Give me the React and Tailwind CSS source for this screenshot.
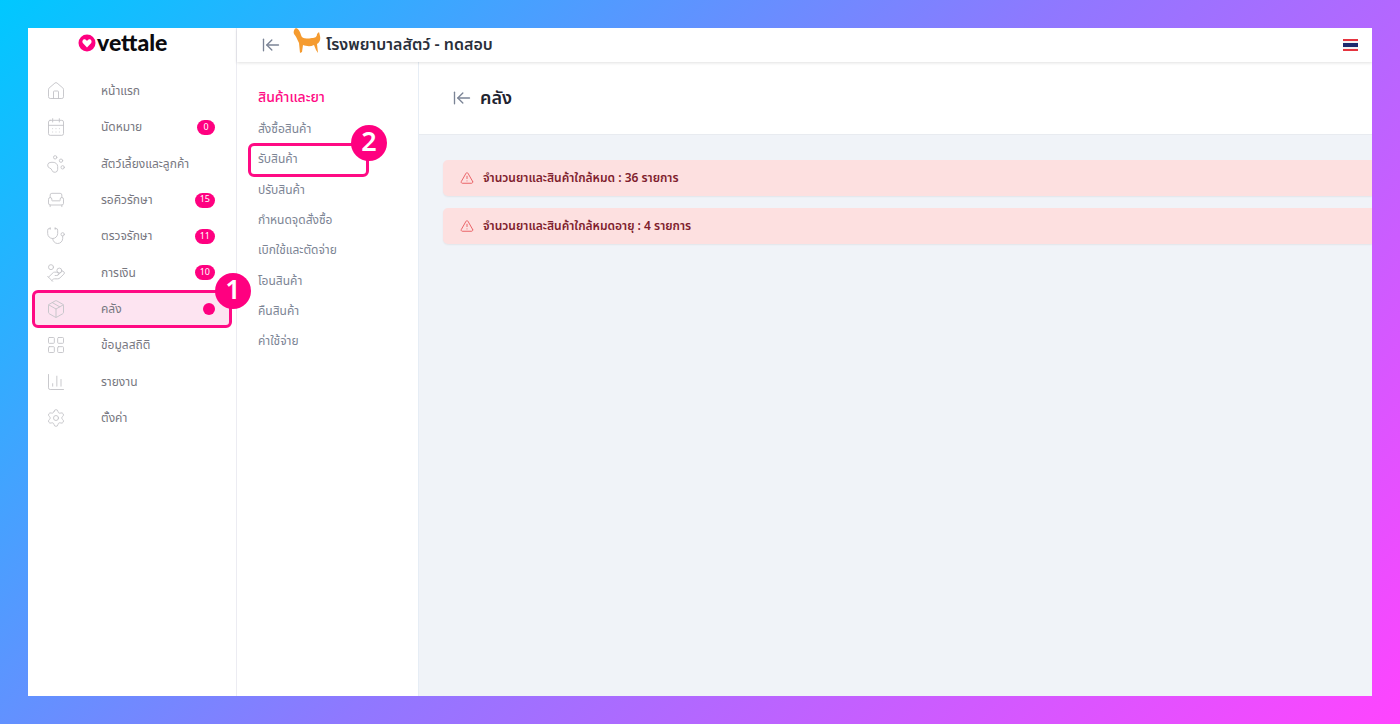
import React from 'react';
import { House, CalendarDays, PawPrint, Armchair, Stethoscope, HandCoins, Package, LayoutGrid, ChartColumn, Settings, ArrowLeftToLine, TriangleAlert } from 'lucide-react';

const font = { fontFamily: '"Noto Sans Thai", "Noto Sans", Inter, sans-serif' };

const mainMenu = [
  { label: 'หน้าแรก', icon: House },
  { label: 'นัดหมาย', icon: CalendarDays, badge: '0' },
  { label: 'สัตว์เลี้ยงและลูกค้า', icon: PawPrint },
  { label: 'รอคิวรักษา', icon: Armchair, badge: '15' },
  { label: 'ตรวจรักษา', icon: Stethoscope, badge: '11' },
  { label: 'การเงิน', icon: HandCoins, badge: '10' },
  { label: 'คลัง', icon: Package, active: true },
  { label: 'ข้อมูลสถิติ', icon: LayoutGrid },
  { label: 'รายงาน', icon: ChartColumn },
  { label: 'ตั้งค่า', icon: Settings },
];

const subMenu = ['สั่งซื้อสินค้า', 'รับสินค้า', 'ปรับสินค้า', 'กำหนดจุดสั่งซื้อ', 'เบิกใช้และตัดจ่าย', 'โอนสินค้า', 'คืนสินค้า', 'ค่าใช้จ่าย'];

const alerts = ['จำนวนยาและสินค้าใกล้หมด : 36 รายการ', 'จำนวนยาและสินค้าใกล้หมดอายุ : 4 รายการ'];

const Marker = ({ n, className }) => (
  <div className={`absolute flex h-[36px] w-[36px] items-center justify-center rounded-full bg-[#ff0080] text-[27px] font-semibold text-white ${className}`}>
    {n}
  </div>
);

const MenuRow = ({ item }) => {
  const Icon = item.icon;
  return (
    <div className="relative flex h-[36.3px] items-center pl-[18px] pr-[21px]">
      {item.active && <div className="absolute left-[4px] right-[4px] top-[-1px] h-[38px] rounded-[6px] border-[3px] border-[#ff0a84] bg-[#fde4f1]" />}
      <Icon className="relative h-[20px] w-[20px] text-[#c4c4c8]" strokeWidth={1.1} />
      <span className="relative ml-[35px] text-[12px] text-[#77777f]">{item.label}</span>
      {item.badge && (
        <span className="relative ml-auto flex h-[15px] min-w-[18px] items-center justify-center rounded-full bg-[#ff0080] px-[5px] text-[9px] text-white">{item.badge}</span>
      )}
      {item.active && <span className="relative ml-auto h-[12px] w-[12px] rounded-full bg-[#ff0080]" />}
    </div>
  );
};

const DogIcon = () => (
  <svg viewBox="0 0 28 26" className="h-[26px] w-[28px]">
    <path d="M3 0 C6 1 7 4 8 7 C9 11 13 11 19 10 C22 10 24 9 24 6 L26 4 L27 8 C28 12 26 15 24 16 L25 25 L23 22 L21 17 C17 19 13 18 10 17 L9 24 L7 25 L6 15 C4 11 3 8 1 6 C0 4 1 1 3 0 Z" fill="#f59b2f" />
  </svg>
);

const ThaiFlag = () => (
  <div className="flex h-[12px] w-[15px] flex-col">
    <div className="h-[2px] bg-[#e5343f]" />
    <div className="h-[2px] bg-[#f3f3f3]" />
    <div className="h-[4px] bg-[#1c2a6e]" />
    <div className="h-[2px] bg-[#f3f3f3]" />
    <div className="h-[2px] bg-[#e5343f]" />
  </div>
);

export default function App() {
  return (
    <div style={font} className="h-[724px] w-[1400px] overflow-hidden bg-[linear-gradient(135deg,#00c8ff_0%,#8f78ff_50%,#ff44ff_100%)] p-[28px]">
      <div className="relative flex h-[668px] w-[1344px] overflow-hidden bg-white">
        {/* main sidebar */}
        <aside className="w-[209px] shrink-0 border-r border-[#ececf2] bg-white">
          <div className="flex h-[45px] items-start pl-[50px] pt-[1px]">
            <svg viewBox="0 0 18 18" className="mt-[5px] h-[18px] w-[18px]">
              <circle cx="9" cy="9" r="8.5" fill="#ff0080" />
              <path d="M9 13.5 L4.8 9 C3.5 7 5.6 4.6 7.4 5.6 C8.2 6 8.7 6.5 9 7 C9.3 6.5 9.8 6 10.6 5.6 C12.4 4.6 14.5 7 13.2 9 Z" fill="#fff" />
            </svg>
            <span className="ml-[1px] text-[23px] leading-[26px] font-bold text-[#0b0b0f]" style={{ fontFamily: 'Lato, sans-serif', fontWeight: 900 }}>vettale</span>
          </div>
          {mainMenu.map((item) => <MenuRow key={item.label} item={item} />)}
        </aside>

        <div className="flex min-w-0 flex-1 flex-col">
          {/* top bar */}
          <header className="z-10 flex h-[34px] shrink-0 items-center pl-[24px] pr-[14px] shadow-[0_1px_3px_rgba(0,0,0,0.12)]">
            <ArrowLeftToLine className="h-[20px] w-[20px] text-[#7b8496]" strokeWidth={1.6} />
            <div className="ml-[12px] mt-[-8px]"><DogIcon /></div>
            <span className="ml-[5px] text-[16px] font-semibold text-[#2a2f3a]">โรงพยาบาลสัตว์ - ทดสอบ</span>
            <div className="ml-auto"><ThaiFlag /></div>
          </header>

          <div className="flex min-h-0 flex-1">
            {/* sub menu */}
            <nav className="w-[182px] shrink-0 border-r border-[#e6edf5] bg-white pl-[21px] pt-[24px]">
              <div className="h-[24px] text-[14px] leading-[24px] font-medium text-[#ff0a84]">สินค้าและยา</div>
              <div className="mt-[4px]">
                {subMenu.map((label) => (
                  <div key={label} className="flex h-[30.3px] items-center text-[12px] text-[#7c8494]">{label}</div>
                ))}
              </div>
            </nav>

            {/* content */}
            <main className="flex min-w-0 flex-1 flex-col bg-[#f0f3f8]">
              <div className="flex h-[73px] shrink-0 items-center border-b border-[#e8ebf0] bg-white pl-[33px]">
                <ArrowLeftToLine className="h-[20px] w-[20px] text-[#7b8496]" strokeWidth={1.6} />
                <h1 className="ml-[8px] text-[18px] font-semibold text-[#1f2430]">คลัง</h1>
              </div>
              <div className="flex flex-col gap-[12px] pl-[24px] pt-[25px]">
                {alerts.map((text) => (
                  <div key={text} className="flex h-[36px] items-center rounded-l-[5px] bg-[#fde0e0] pl-[17px] shadow-[0_1px_2px_rgba(0,0,0,0.06)]">
                    <TriangleAlert className="h-[14px] w-[14px] text-[#e85a5f]" strokeWidth={1.6} />
                    <span className="ml-[9px] text-[12px] font-semibold text-[#7f1d2d]">{text}</span>
                  </div>
                ))}
              </div>
            </main>
          </div>
        </div>

        {/* step markers over the screenshot */}
        <div className="absolute left-[220px] top-[115px] h-[34px] w-[121px] rounded-[6px] border-[3px] border-[#ff0a84]" />
        <Marker n="1" className="left-[187px] top-[245px]" />
        <Marker n="2" className="left-[323px] top-[97px]" />
      </div>
    </div>
  );
}
